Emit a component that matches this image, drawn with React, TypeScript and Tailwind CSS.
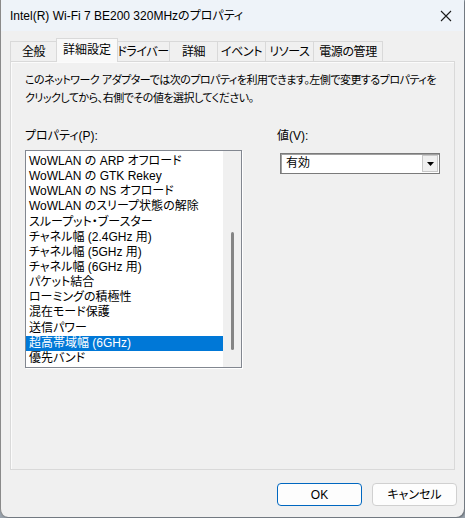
const font = "[font-family:'Liberation_Sans','Noto_Sans_CJK_JP',sans-serif] [font-feature-settings:'palt']"

const tabs = [
  { label: '全般', w: 'w-[47px]' },
  { label: '詳細設定', w: 'w-[62px]', active: true },
  { label: 'ドライバー', w: 'w-[53px]' },
  { label: '詳細', w: 'w-[48px]' },
  { label: 'イベント', w: 'w-[48px]' },
  { label: 'リソース', w: 'w-[48px]' },
  { label: '電源の管理', w: 'w-[69px]' },
]

const items = [
  'WoWLAN の ARP オフロード',
  'WoWLAN の GTK Rekey',
  'WoWLAN の NS オフロード',
  'WoWLAN のスリープ状態の解除',
  'スループット・ブースター',
  'チャネル幅 (2.4GHz 用)',
  'チャネル幅 (5GHz 用)',
  'チャネル幅 (6GHz 用)',
  'パケット結合',
  'ローミングの積極性',
  '混在モード保護',
  '送信パワー',
  '超高帯域幅 (6GHz)',
  '優先バンド',
]

export default function App() {
  return (
    <div className={`h-[518px] w-[465px] bg-[#9aa3ad] text-[12px] text-black ${font}`}>
      <div className="flex h-[517px] w-[464px] flex-col overflow-hidden rounded-b-[8px] border-l border-[#8a8a8a] bg-[#f0f0f0] shadow-[1px_1px_2px_rgba(0,0,0,0.35)]">
        <div className="flex h-[31px] shrink-0 items-center justify-between bg-[#eef3f9] pl-[9px] pr-[11px]">
          <span className="text-[12px]">Intel(R) Wi-Fi 7 BE200 320MHzのプロパティ</span>
          <svg width="12" height="12" viewBox="0 0 12 12" className="mr-[1px]">
            <path d="M1 1L11 11M11 1L1 11" stroke="#1a1a1a" strokeWidth="1.1" />
          </svg>
        </div>

        <div className="mt-[7px] flex h-[24px] items-end pl-[9px]">
          {tabs.map((t) =>
            t.active ? (
              <div
                key={t.label}
                className={`${t.w} relative z-10 -mx-[1px] flex h-[24px] items-center justify-center whitespace-nowrap border border-b-0 border-[#d9d9d9] bg-[#f9f9f9] pb-[1px]`}
              >
                {t.label}
              </div>
            ) : (
              <div
                key={t.label}
                className={`${t.w} flex h-[21px] items-center justify-center whitespace-nowrap border border-l-0 border-[#d9d9d9] bg-[#f0f0f0] tracking-[-0.4px] first:border-l`}
              >
                {t.label}
              </div>
            ),
          )}
        </div>

        <div className="mx-[9px] -mt-[1px] flex h-[409px] flex-col border border-[#d9d9d9] bg-[#f0f0f0] px-[14px] pt-[9px] shadow-[inset_1px_1px_0_#fbfbfb]">
          <p className="whitespace-nowrap text-[11px] leading-[18px] tracking-[-0.5px]">
            このネットワーク アダプターでは次のプロパティを利用できます。左側で変更するプロパティを
            <br />
            クリックしてから、右側でその値を選択してください。
          </p>

          <div className="mt-[20px] flex">
            <div className="w-[217px]">
              <div className="leading-[18px]">プロパティ(P):</div>
              <div className="mt-[5px] flex h-[218px] border border-[#828790] bg-white shadow-[1px_1px_0_#ffffff]">
                <div className="flex-1 overflow-hidden">
                  <div className="mt-[3px]">
                    {items.map((it) => (
                      <div
                        key={it}
                        className={`h-[15.15px] whitespace-nowrap pl-[3px] leading-[15px] ${
                          it === '超高帯域幅 (6GHz)' ? 'bg-[#0078d7] text-white' : ''
                        }`}
                      >
                        {it}
                      </div>
                    ))}
                  </div>
                </div>
                <div className="flex w-[18px] justify-center bg-[#f0f0f0]">
                  <div className="mt-[81px] h-[118px] w-[3px] rounded-full bg-[#858585]" />
                </div>
              </div>
            </div>

            <div className="ml-[38px] w-[160px]">
              <div className="-ml-[3px] leading-[18px]">値(V):</div>
              <div className="mt-[8px] flex h-[21px] border border-[#7a7a7a] bg-white shadow-[inset_1px_1px_0_#a0a0a0]">
                <div className="flex-1 pl-[5px] leading-[19px]">有効</div>
                <div className="m-[1px] flex w-[16px] items-center justify-center border border-[#c8c8c8] bg-[#f0f0f0]">
                  <svg width="7" height="4" viewBox="0 0 7 4">
                    <path d="M0 0H7L3.5 4Z" fill="#000" />
                  </svg>
                </div>
              </div>
            </div>
          </div>
        </div>

        <div className="mr-[7px] mt-[13px] flex justify-end gap-[10px]">
          <button className="h-[23px] w-[85px] rounded-[4px] border border-[#0067c0] bg-[#fdfdfd] text-[12px]">
            OK
          </button>
          <button className="h-[23px] w-[85px] rounded-[4px] border border-[#d0d0d0] bg-[#fdfdfd] text-[12px]">
            キャンセル
          </button>
        </div>
      </div>
    </div>
  )
}
